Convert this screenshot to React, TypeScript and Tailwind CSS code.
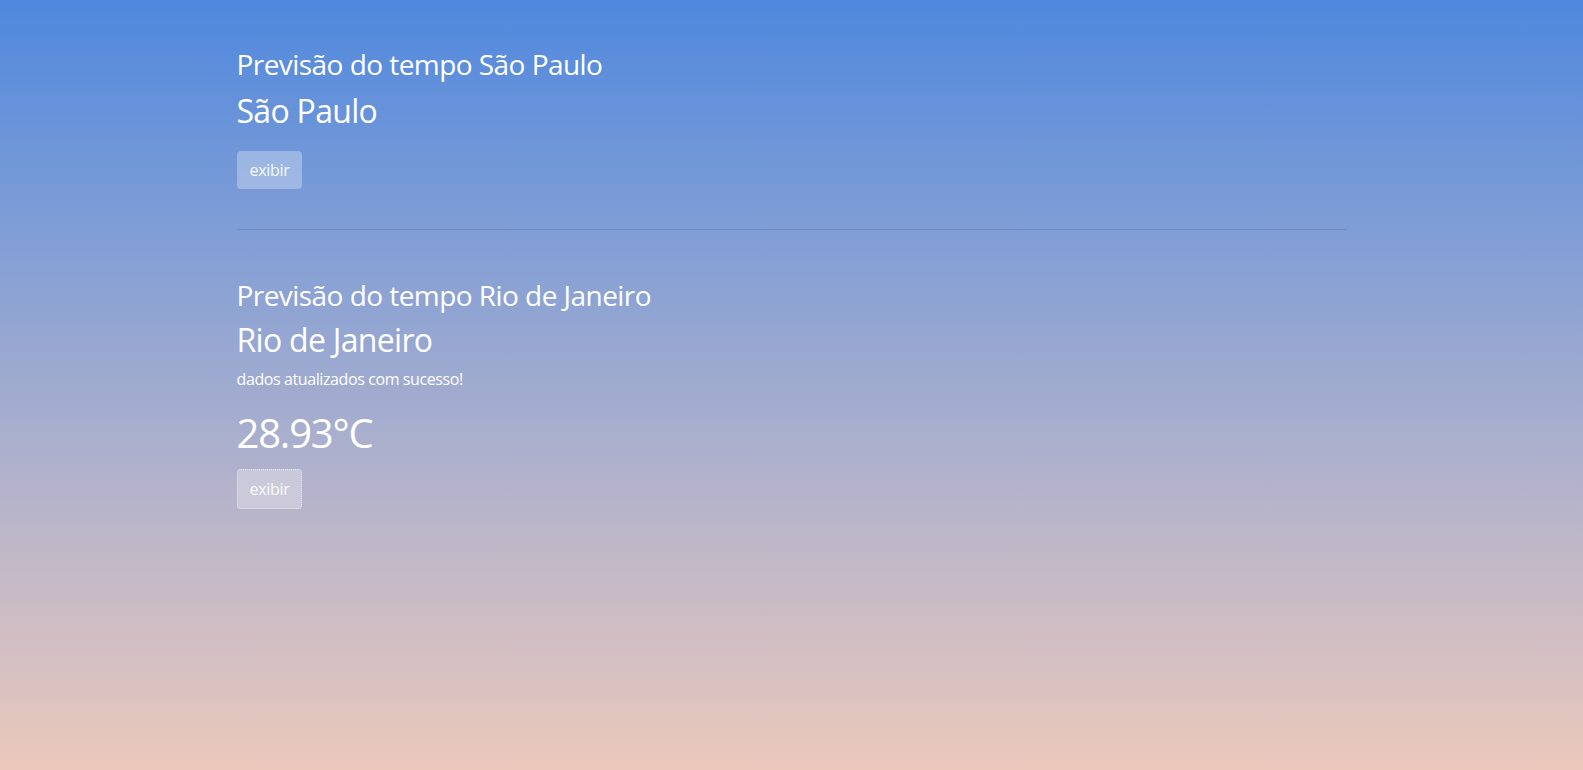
export default function App() {
  return (
    <main
      className="min-h-screen bg-gradient-to-b from-[#4e88dd] to-[#ebc8bb] text-white"
      style={{ fontFamily: '"Open Sans", "Noto Sans", sans-serif' }}
    >
      <div className="mx-auto max-w-[1140px] px-[15px]">

        {/* São Paulo */}
        <section className="pt-[47px]">
          <h3 className="mb-[11px] text-[28px] leading-[34px] tracking-[-0.55px]">Previsão do tempo São Paulo</h3>
          <h2 className="text-[32px] leading-[38px] tracking-[-0.7px]">São Paulo</h2>
          <button className="mt-[21px] h-[38px] rounded border border-transparent bg-white/30 px-3 text-base tracking-[-0.3px] text-white/90">
            exibir
          </button>
        </section>

        <hr className="mt-10 border-0 border-t border-black/10" />

        {/* Rio de Janeiro */}
        <section className="pt-[48px]">
          <h3 className="mb-[9px] text-[28px] leading-[34px] tracking-[-0.55px]">Previsão do tempo Rio de Janeiro</h3>
          <h2 className="text-[32px] leading-[38px] tracking-[-0.7px]">Rio de Janeiro</h2>
          <p className="mt-2 mb-[18px] text-base leading-6 tracking-[-0.4px]">dados atualizados com sucesso!</p>
          <h1 className="text-[40px] leading-[48px] tracking-[-1.2px]">28.93°C</h1>
          <button className="mt-3 h-[40px] rounded border border-dotted border-white/50 bg-white/30 px-3 text-base tracking-[-0.3px] text-white/90">
            exibir
          </button>
        </section>

      </div>
    </main>
  );
}
